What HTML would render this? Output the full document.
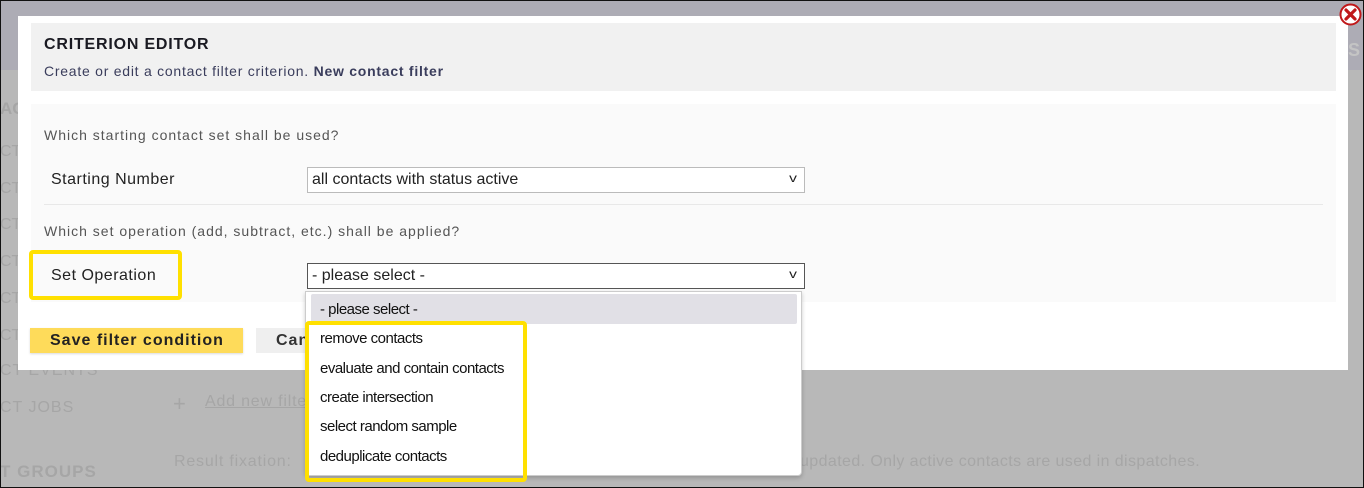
<!DOCTYPE html>
<html><head><meta charset="utf-8">
<style>
*{box-sizing:border-box;margin:0;padding:0}
body{width:1364px;height:488px;overflow:hidden;position:relative;background:#b8b8b8;font-family:"Liberation Sans",sans-serif;}
.frame{position:absolute;left:0;top:0;width:1364px;height:488px;border:1px solid #111;z-index:50;pointer-events:none}
.topband{position:absolute;left:0;top:0;width:1364px;height:70px;background:#adacb5}
.bg{position:absolute;color:#a6a6a6;font-size:16px}
.modal{position:absolute;left:18px;top:16px;width:1330px;height:354px;background:#fff}
.hdr{position:absolute;left:13px;top:7px;width:1305px;height:68px;background:#f1f1f1}
.hdr h1{position:absolute;left:13px;top:13px;font-size:16px;font-weight:bold;letter-spacing:0.8px;color:#1a1a22}
.hdr p{position:absolute;left:13px;top:40px;font-size:14px;color:#3a3d5c;letter-spacing:0.75px}
.panel{position:absolute;left:13px;top:88px;width:1305px;height:198px;background:#fafafa}
.q{position:absolute;left:13px;font-size:14px;color:#555;letter-spacing:1px}
.lbl{position:absolute;font-size:16px;color:#222;letter-spacing:0.5px}
.sel{position:absolute;left:276px;width:498px;height:26px;background:#fff;border:1px solid #bbb;font-size:16px;color:#222;padding:3px 4px;letter-spacing:0px}
.sel span.ch{position:absolute;right:8px;top:3px;font-size:12px;transform:scaleX(1.3)}
.sep{position:absolute;left:13px;top:100px;width:1279px;height:1px;background:#e8e8e8}
.btn{position:absolute;top:312px;height:25px;font-size:16px;font-weight:bold;letter-spacing:1px;padding:4px 0 0 20px;color:#222}
.dd{position:absolute;left:305px;top:291px;width:497px;height:185px;background:#fff;border:1px solid #ccc;border-radius:0 0 4px 4px;box-shadow:0 2px 4px rgba(0,0,0,.2);z-index:10}
.opt{position:absolute;left:14px;font-size:15px;color:#111;letter-spacing:-0.5px}
.hl{position:absolute;border:4px solid #ffe000;border-radius:4px;z-index:20}
</style></head><body>
<div class="topband"></div>
<div class="bg" style="left:0;top:99px;font-weight:bold;font-size:17px">AC</div>
<div class="bg" style="left:0;top:143px">CT</div>
<div class="bg" style="left:0;top:180px">CT</div>
<div class="bg" style="left:0;top:216px">CT</div>
<div class="bg" style="left:0;top:253px">CT</div>
<div class="bg" style="left:0;top:290px">CT</div>
<div class="bg" style="left:0;top:327px">CT</div>
<div class="bg" style="left:0;top:362px;letter-spacing:1px">CT EVENTS</div>
<div class="bg" style="left:0;top:399px;letter-spacing:1px">CT JOBS</div>
<div class="bg" style="left:0;top:462px;font-weight:bold;font-size:17px;letter-spacing:1px">T GROUPS</div>
<div class="bg" style="left:173px;top:391px;font-size:22px">+</div>
<div class="bg" style="left:205px;top:393px;text-decoration:underline;letter-spacing:0.8px">Add new filter</div>
<div class="bg" style="left:174px;top:453px;letter-spacing:0.8px">Result fixation:</div>
<div class="bg" style="left:800px;top:453px;letter-spacing:0.4px">updated. Only active contacts are used in dispatches.</div>
<div class="bg" style="left:1348px;top:40px;font-weight:bold;font-size:18px;color:#c4c4c4">S</div>

<div class="modal">
 <div class="hdr"><h1>CRITERION EDITOR</h1><p>Create or edit a contact filter criterion. <b>New contact filter</b></p></div>
 <div class="panel">
  <div class="q" style="top:23px">Which starting contact set shall be used?</div>
  <div class="lbl" style="left:20px;top:67px">Starting Number</div>
  <div class="sel" style="top:63px">all contacts with status active<span class="ch">v</span></div>
  <div class="sep"></div>
  <div class="q" style="top:119px">Which set operation (add, subtract, etc.) shall be applied?</div>
  <div class="lbl" style="left:20px;top:163px">Set Operation</div>
  <div class="sel" style="top:159px;border-color:#555">- please select -<span class="ch">v</span></div>
 </div>
 <div class="btn" style="left:12px;width:213px;background:#fedb5a;box-shadow:0 1px 2px rgba(0,0,0,.15)">Save filter condition</div>
 <div class="btn" style="left:238px;width:90px;background:#efefef;color:#333">Cancel</div>
</div>

<div class="dd">
 <div style="position:absolute;left:5px;top:2px;width:486px;height:30px;background:#e1e0e6;border-radius:2px"></div>
 <div class="opt" style="top:9px">- please select -</div>
 <div class="opt" style="top:38px">remove contacts</div>
 <div class="opt" style="top:68px">evaluate and contain contacts</div>
 <div class="opt" style="top:97px">create intersection</div>
 <div class="opt" style="top:126px">select random sample</div>
 <div class="opt" style="top:156px">deduplicate contacts</div>
</div>
<div class="hl" style="left:29px;top:250px;width:153px;height:50px"></div>
<div class="hl" style="left:305px;top:321px;width:222px;height:161px"></div>

<svg style="position:absolute;left:1339px;top:3px;z-index:30" width="23" height="23" viewBox="0 0 23 23">
 <circle cx="11.5" cy="11.5" r="10" fill="#fff" stroke="#c0181a" stroke-width="2"/>
 <path d="M7 7L16 16M16 7L7 16" stroke="#c0181a" stroke-width="3.2" stroke-linecap="round"/>
</svg>
<div class="frame"></div>
</body></html>
